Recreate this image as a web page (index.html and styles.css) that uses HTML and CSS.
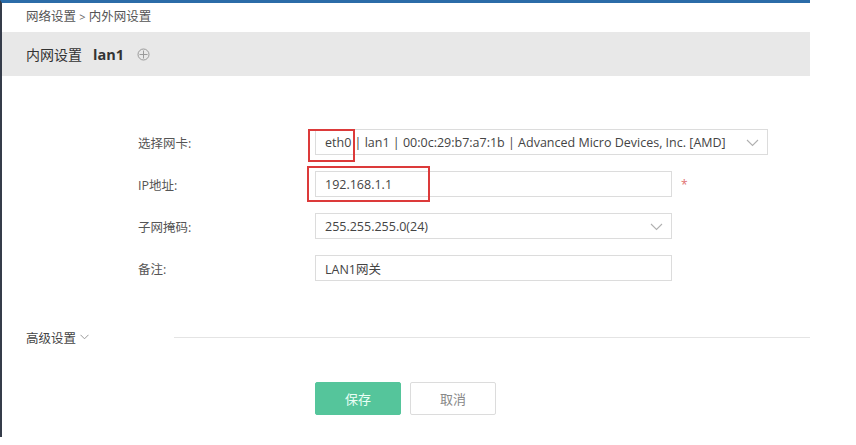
FILE: index.html
```html
<!DOCTYPE html>
<html lang="zh">
<head>
<meta charset="utf-8">
<link rel="stylesheet" href="styles.css">
</head>
<body>
<div class="app">
  <div class="crumb">网络设置 <span class="gt">&gt;</span> 内外网设置</div>
  <div class="head">
    <span class="head-title">内网设置</span>
    <span class="head-name">lan1</span>
    <svg class="plus" width="13" height="13" viewBox="0 0 13 13"><circle cx="6.5" cy="6.5" r="5.5" fill="none" stroke="#9a9a9a" stroke-width="1"/><path d="M6.5 2.5v8M2.5 6.5h8" stroke="#9a9a9a" stroke-width="1"/></svg>
  </div>
  <div class="form">
    <div class="row">
      <label class="lbl">选择网卡:</label>
      <div class="field sel wide">
        <span class="val">eth0 | lan1 | 00:0c:29:b7:a7:1b | Advanced Micro Devices, Inc. [AMD]</span>
        <svg class="chev" width="13" height="8" viewBox="0 0 13 8"><path d="M1 1l5.5 5.5L12 1" fill="none" stroke="#b0b0b0" stroke-width="1.1"/></svg>
        <span class="mark mark1"></span>
      </div>
    </div>
    <div class="row">
      <label class="lbl">IP地址:</label>
      <div class="field">
        <span class="val">192.168.1.1</span>
        <span class="mark mark2"></span>
      </div>
      <span class="req">*</span>
    </div>
    <div class="row">
      <label class="lbl">子网掩码:</label>
      <div class="field sel">
        <span class="val">255.255.255.0(24)</span>
        <svg class="chev" width="13" height="8" viewBox="0 0 13 8"><path d="M1 1l5.5 5.5L12 1" fill="none" stroke="#b0b0b0" stroke-width="1.1"/></svg>
      </div>
    </div>
    <div class="row">
      <label class="lbl">备注:</label>
      <div class="field">
        <span class="val">LAN1网关</span>
      </div>
    </div>
  </div>
  <div class="adv">
    <span class="adv-title">高级设置</span>
    <svg class="adv-chev" width="9" height="6" viewBox="0 0 9 6"><path d="M0.5 0.8l4 4 4-4" fill="none" stroke="#999" stroke-width="1"/></svg>
    <span class="adv-line"></span>
  </div>
  <div class="actions">
    <button class="btn primary">保存</button>
    <button class="btn">取消</button>
  </div>
</div>
</body>
</html>
```
FILE: styles.css
```css
* { box-sizing: border-box; }
html, body { margin: 0; padding: 0; background: #fff; }
body {
  font-family: "Open Sans", "Noto Sans CJK SC", sans-serif;
  font-size: 13px;
  color: #444;
}
.app {
  width: 810px;
  height: 437px;
  border-left: 2px solid #353c4a;
  border-top: 3px solid #2b6ca8;
  position: relative;
}
.crumb {
  height: 29px;
  padding-left: 24px;
  line-height: 28px;
  font-size: 12.5px;
  color: #555;
}
.crumb .gt { font-size: 11px; color: #666; }
.head {
  height: 44px;
  background: #e8e8e8;
  display: flex;
  align-items: center;
  padding-left: 24px;
}
.head-title { font-size: 14px; color: #333; }
.head-name { font-size: 14.5px; font-weight: 700; color: #333; margin-left: 11px; }
.plus { margin-left: 13px; margin-top: 1px; }
.form {
  padding-top: 53px;
  display: flex;
  flex-direction: column;
  gap: 16px;
}
.row {
  display: flex;
  align-items: center;
  height: 26px;
}
.lbl {
  width: 313px;
  padding-left: 136px;
  font-size: 12.5px;
  color: #555;
}
.field {
  position: relative;
  width: 357px;
  height: 26px;
  border: 1px solid #dcdcdc;
  display: flex;
  align-items: center;
  padding-left: 9px;
  font-size: 12.5px;
  color: #444;
}
.field.wide { width: 453px; }
.field.sel { padding-right: 30px; }
.val { white-space: nowrap; overflow: hidden; flex: 1; }
.chev { position: absolute; right: 8px; top: 9px; }
.req { color: #e07070; margin-left: 9px; font-size: 12px; }
.mark {
  position: absolute;
  border: 2.5px solid #dc3a3a;
}
.mark1 { left: -8px; top: -1px; width: 47px; height: 33px; }
.mark2 { left: -9px; top: -6px; width: 123px; height: 36px; }
.adv {
  display: flex;
  align-items: center;
  height: 20px;
  margin-top: 46px;
  padding-left: 24px;
}
.adv-title { font-size: 12.5px; color: #444; }
.adv-chev { margin-left: 4px; }
.adv-line { flex: 1; height: 1px; background: #e4e4e4; margin-left: 85px; }
.actions {
  display: flex;
  gap: 9px;
  margin-top: 35px;
  padding-left: 313px;
}
.btn {
  width: 86px;
  height: 33px;
  border: 1px solid #dcdcdc;
  background: #fff;
  color: #888;
  font-family: "Noto Sans CJK SC", sans-serif;
  font-size: 13px;
  border-radius: 2px;
  padding: 0;
}
.btn.primary {
  background: #55c59b;
  border-color: #55c59b;
  color: #eafff6;
}
```
